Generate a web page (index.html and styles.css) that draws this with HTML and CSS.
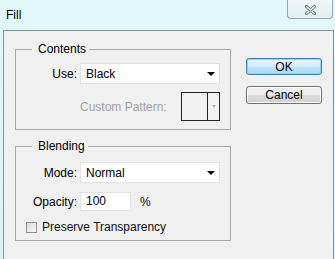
FILE: index.html
```html
<!DOCTYPE html>
<html>
<head>
<meta charset="utf-8">
<link rel="stylesheet" href="styles.css">
</head>
<body>
<div class="window">
  <div class="titlebar">
    <span class="title">Fill</span>
    <div class="close">
      <svg width="11" height="10" viewBox="0 0 11 10">
        <path d="M1.5 1.5 L9.5 8.5 M9.5 1.5 L1.5 8.5" stroke="#6f7f88" stroke-width="3" stroke-linecap="round" fill="none"/>
        <path d="M1.5 1.5 L9.5 8.5 M9.5 1.5 L1.5 8.5" stroke="#f4f8f9" stroke-width="1.2" stroke-linecap="round" fill="none"/>
      </svg>
    </div>
  </div>
  <div class="panel">
    <div class="groups">
      <fieldset class="group contents">
        <legend>Contents</legend>
        <div class="row use">
          <span class="label">Use:</span>
          <div class="select"><span>Black</span><span class="arrow"></span></div>
        </div>
        <div class="row pattern">
          <span class="muted">Custom Pattern:</span>
          <div class="swatch"><div class="swatch-box"></div><div class="swatch-drop"><span class="arrow small"></span></div></div>
        </div>
      </fieldset>
      <fieldset class="group blending">
        <legend>Blending</legend>
        <div class="row mode">
          <span class="label">Mode:</span>
          <div class="select"><span>Normal</span><span class="arrow"></span></div>
        </div>
        <div class="row opacity">
          <span class="label">Opacity:</span>
          <div class="input">100</div>
          <span class="pct">%</span>
        </div>
        <div class="row preserve">
          <span class="checkbox"></span>
          <span>Preserve Transparency</span>
        </div>
      </fieldset>
    </div>
    <div class="buttons">
      <div class="btn ok">OK</div>
      <div class="btn cancel">Cancel</div>
    </div>
  </div>
</div>
</body>
</html>
```
FILE: styles.css
```css
html, body {
  margin: 0;
  padding: 0;
}
body {
  width: 335px;
  height: 259px;
  overflow: hidden;
  background: linear-gradient(#e2f8fa, #d9f3f5);
  font-family: "Liberation Sans", Arial, sans-serif;
  font-size: 12px;
  color: #111;
}
.window {
  display: flex;
  flex-direction: column;
  height: 259px;
}
.titlebar {
  height: 30px;
  display: flex;
  align-items: flex-start;
}
.title {
  margin: 8px 0 0 6px;
  line-height: 14px;
  color: #000;
}
.close {
  margin-left: auto;
  margin-right: 2px;
  width: 46px;
  height: 19px;
  box-sizing: border-box;
  border: 1px solid #95a5ad;
  border-top: none;
  border-radius: 0 0 4px 4px;
  background: linear-gradient(#eef8fa, #dfeef2);
  display: flex;
  align-items: center;
  justify-content: center;
  padding-top: 2px;
}
.panel {
  flex: 1;
  margin: 0 1px 0 3px;
  border: 1px solid #7f9299;
  border-bottom: none;
  background: #f0f0f0;
  display: flex;
  padding: 11px 0 0 11px;
}
.groups {
  display: flex;
  flex-direction: column;
}
.group {
  box-sizing: border-box;
  width: 216px;
  margin: 0;
  padding: 0 0 8px 0;
  min-width: 0;
  border: 1px solid #a9a9a9;
}
.group legend {
  margin-left: 16px;
  padding: 0 3px 0 6px;
  line-height: 14px;
  color: #000;
}
.blending {
  margin-top: 9px;
  padding-bottom: 6px;
}
.row {
  display: flex;
  align-items: center;
  white-space: nowrap;
}
.label {
  width: 61px;
  margin-right: 3px;
  text-align: right;
  color: #000;
}
.select {
  box-sizing: border-box;
  width: 140px;
  height: 21px;
  background: #fff;
  border: 1px solid #e2e2e2;
  display: flex;
  align-items: center;
  padding: 0 4px 0 5px;
  color: #000;
}
.select span:first-child {
  flex: 1;
}
.arrow {
  width: 0;
  height: 0;
  border-left: 4px solid transparent;
  border-right: 4px solid transparent;
  border-top: 4px solid #000;
}
.arrow.small {
  border-left-width: 2.5px;
  border-right-width: 2.5px;
  border-top: 3px solid #b0b0b0;
}
.use {
  margin-top: 7px;
}
.pattern {
  margin-top: 8px;
  margin-left: 64px;
  width: 140px;
  justify-content: space-between;
}
.muted {
  color: #a3a3a3;
}
.swatch {
  box-sizing: border-box;
  width: 39px;
  height: 29px;
  border: 1px solid #222;
  display: flex;
  background: #f0f0f0;
}
.swatch-box {
  flex: 1;
  border-right: 1px solid #222;
}
.swatch-drop {
  width: 11px;
  display: flex;
  align-items: center;
  justify-content: center;
}
.mode {
  margin-top: 9px;
}
.opacity {
  margin-top: 9px;
}
.input {
  box-sizing: border-box;
  width: 51px;
  height: 19px;
  background: #fff;
  border: 1px solid #e2e2e2;
  padding-left: 5px;
  line-height: 17px;
  color: #000;
}
.pct {
  margin-left: 9px;
}
.preserve {
  margin-top: 9px;
  height: 14px;
}
.checkbox {
  box-sizing: border-box;
  width: 11px;
  height: 11px;
  margin: 0 5px 0 10px;
  border: 1px solid #8e8f8f;
  background: linear-gradient(135deg, #dcdcdc, #f6f6f6);
}
.buttons {
  margin-left: 15px;
  padding-top: 16px;
  display: flex;
  flex-direction: column;
  gap: 11px;
}
.btn {
  box-sizing: border-box;
  width: 76px;
  height: 17px;
  border-radius: 3px;
  display: flex;
  align-items: center;
  justify-content: center;
  color: #000;
}
.ok {
  border: 1px solid #3c7fb1;
  background: linear-gradient(#e9f6fd 0%, #d4eefb 50%, #bee6fd 51%, #a7d9f5 100%);
  box-shadow: inset 0 0 0 1px #8fd3f8;
}
.cancel {
  height: 18px;
  border: 1px solid #707070;
  background: linear-gradient(#f2f2f2 0%, #ebebeb 50%, #dddddd 51%, #cfcfcf 100%);
  box-shadow: inset 0 0 0 1px #fbfbfb;
}
```
